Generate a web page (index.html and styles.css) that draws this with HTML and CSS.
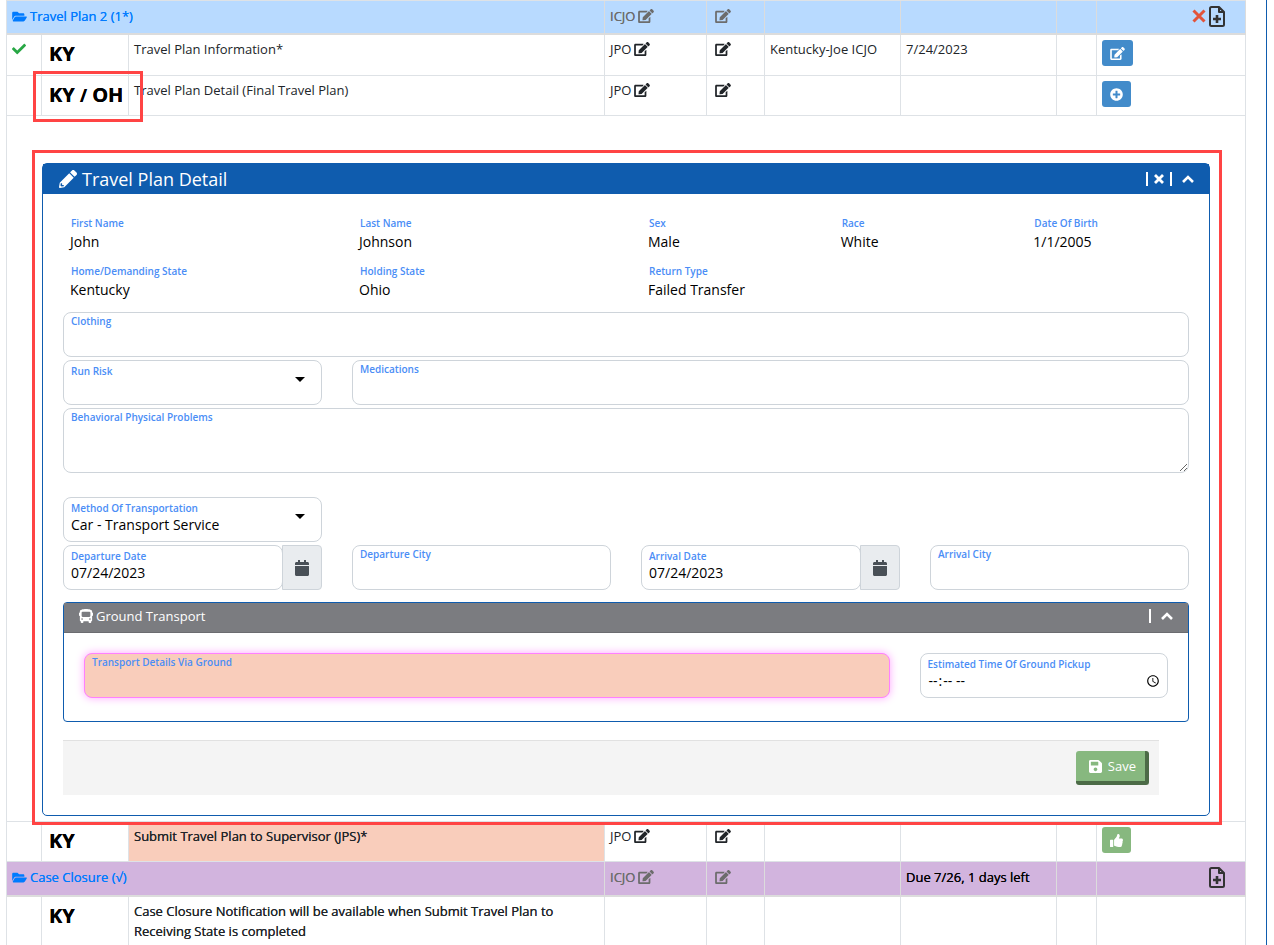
FILE: index.html
```html
<!DOCTYPE html>
<html lang="en">
<head>
<meta charset="utf-8">
<title>Travel Plan Detail</title>
<link rel="stylesheet" href="styles.css">
</head>
<body>
<svg class="sprite" aria-hidden="true">
  <symbol id="i-edit" viewBox="0 0 576 512"><path d="M402.6 83.2l90.2 90.2c3.8 3.8 3.8 10 0 13.8L274.4 405.6l-92.8 10.3c-12.4 1.4-22.9-9.1-21.5-21.5l10.3-92.8L388.8 83.2c3.8-3.8 10-3.8 13.8 0zm162-22.9l-48.8-48.8c-15.2-15.2-39.9-15.2-55.2 0l-35.4 35.4c-3.8 3.8-3.8 10 0 13.8l90.2 90.2c3.8 3.8 10 3.8 13.8 0l35.4-35.4c15.2-15.3 15.2-40 0-55.2zM384 346.2V448H64V128h229.8c3.2 0 6.2-1.3 8.5-3.5l40-40c7.6-7.6 2.2-20.5-8.5-20.5H48C21.5 64 0 85.5 0 112v352c0 26.5 21.5 48 48 48h352c26.5 0 48-21.5 48-48V306.2c0-10.7-12.9-16-20.5-8.5l-40 40c-2.2 2.3-3.5 5.3-3.5 8.5z"/></symbol>
  <symbol id="i-folder" viewBox="0 0 576 512"><path d="M572.694 292.093L500.27 416.248A63.997 63.997 0 0 1 444.989 448H45.025c-18.523 0-30.064-20.093-20.731-36.093l72.424-124.155A64 64 0 0 1 152 256h399.964c18.523 0 30.064 20.093 20.73 36.093zM152 224h328v-48c0-26.51-21.49-48-48-48H272l-64-64H48C21.49 64 0 85.49 0 112v278.046l69.077-118.418C86.214 242.25 117.989 224 152 224z"/></symbol>
  <symbol id="i-check" viewBox="0 0 512 512"><path d="M173.898 439.404l-166.4-166.4c-9.997-9.997-9.997-26.206 0-36.204l36.203-36.204c9.997-9.998 26.207-9.998 36.204 0L192 312.69 432.095 72.596c9.997-9.997 26.207-9.997 36.204 0l36.203 36.204c9.997 9.997 9.997 26.206 0 36.204l-294.4 294.401c-9.998 9.997-26.207 9.997-36.204-.001z"/></symbol>
  <symbol id="i-pencil" viewBox="0 0 512 512"><path d="M497.900 142.100l-46.100 46.100c-4.700 4.700-12.300 4.700-17 0l-111-111c-4.700-4.700-4.700-12.300 0-17l46.100-46.100c18.700-18.700 49.100-18.700 67.900 0l60.100 60.100c18.800 18.700 18.800 49.100 0 67.900zM284.200 99.800L21.600 362.400.4 483.900c-2.900 16.400 11.400 30.600 27.800 27.800l121.500-21.300 262.600-262.600c4.700-4.700 4.700-12.300 0-17l-111-111c-4.800-4.700-12.400-4.700-17.100 0zM88 424h48v36.300l-64.500 11.300-31.100-31.100L51.700 376H88v48z"/></symbol>
  <symbol id="i-plus" viewBox="0 0 512 512"><path d="M256 8C119 8 8 119 8 256s111 248 248 248 248-111 248-248S393 8 256 8zm144 276c0 6.6-5.4 12-12 12h-92v92c0 6.6-5.4 12-12 12h-56c-6.6 0-12-5.4-12-12v-92h-92c-6.6 0-12-5.4-12-12v-56c0-6.6 5.4-12 12-12h92v-92c0-6.6 5.4-12 12-12h56c6.6 0 12 5.4 12 12v92h92c6.6 0 12 5.4 12 12v56z"/></symbol>
  <symbol id="i-save" viewBox="0 0 448 512"><path d="M433.941 129.941l-83.882-83.882A48 48 0 0 0 316.118 32H48C21.49 32 0 53.49 0 80v352c0 26.51 21.49 48 48 48h352c26.51 0 48-21.49 48-48V163.882a48 48 0 0 0-14.059-33.941zM224 416c-35.346 0-64-28.654-64-64 0-35.346 28.654-64 64-64s64 28.654 64 64c0 35.346-28.654 64-64 64zm96-304.52V212c0 6.627-5.373 12-12 12H76c-6.627 0-12-5.373-12-12V108c0-6.627 5.373-12 12-12h228.52c3.183 0 6.235 1.264 8.485 3.515l3.48 3.48A11.996 11.996 0 0 1 320 111.48z"/></symbol>
  <symbol id="i-thumb" viewBox="0 0 512 512"><path d="M104 224H24c-13.255 0-24 10.745-24 24v240c0 13.255 10.745 24 24 24h80c13.255 0 24-10.745 24-24V248c0-13.255-10.745-24-24-24zM384 81.452c0 42.416-25.97 66.208-33.277 94.548h101.723c33.397 0 59.397 27.746 59.553 58.098.084 17.938-7.546 37.249-19.439 49.197l-.11.11c9.836 23.337 8.237 56.037-9.308 79.469 8.681 25.895-.069 57.704-16.382 74.757 4.298 17.598 2.244 32.575-6.148 44.632C440.202 511.587 389.616 512 346.839 512l-2.845-.001c-48.287-.017-87.806-17.598-119.56-31.725-15.957-7.099-36.821-15.887-52.651-16.178-6.54-.12-11.783-5.457-11.783-11.998v-213.77c0-3.2 1.282-6.271 3.558-8.521 39.614-39.144 56.648-80.587 89.117-113.111 14.804-14.832 20.188-37.236 25.393-58.902C282.515 39.293 291.817 0 312 0c24 0 72 8 72 81.452z"/></symbol>
  <symbol id="i-calendar" viewBox="0 0 448 512"><path d="M12 192h424c6.600 0 12 5.400 12 12v260c0 26.500-21.500 48-48 48H48c-26.500 0-48-21.500-48-48V204c0-6.600 5.400-12 12-12zm436-44v-36c0-26.500-21.500-48-48-48h-48V12c0-6.600-5.400-12-12-12h-40c-6.600 0-12 5.400-12 12v52H160V12c0-6.600-5.400-12-12-12h-40c-6.600 0-12 5.400-12 12v52H48C21.500 64 0 85.500 0 112v36c0 6.600 5.400 12 12 12h424c6.600 0 12-5.400 12-12z"/></symbol>
  <symbol id="i-bus" viewBox="0 0 512 512"><path d="M488 128h-8V80c0-44.800-99.200-80-224-80S32 35.200 32 80v48h-8c-13.250 0-24 10.740-24 24v80c0 13.250 10.750 24 24 24h8v160c0 17.670 14.330 32 32 32v32c0 17.670 14.330 32 32 32h32c17.670 0 32-14.330 32-32v-32h192v32c0 17.670 14.330 32 32 32h32c17.670 0 32-14.330 32-32v-32h6.400c16 0 25.600-12.800 25.600-25.600V256h8c13.250 0 24-10.750 24-24v-80c0-13.260-10.750-24-24-24zM112 400c-17.670 0-32-14.330-32-32s14.330-32 32-32 32 14.330 32 32-14.330 32-32 32zm16-112c-17.670 0-32-14.330-32-32V128c0-17.670 14.330-32 32-32h256c17.670 0 32 14.330 32 32v128c0 17.670-14.330 32-32 32H128zm272 112c-17.670 0-32-14.330-32-32s14.330-32 32-32 32 14.330 32 32-14.330 32-32 32z"/></symbol>
  <symbol id="i-file" viewBox="0 0 16 21"><path fill="none" stroke="currentColor" stroke-width="2" stroke-linejoin="round" d="M3 1h7l5 5v12.500a1.500 1.500 0 0 1-1.500 1.500h-11A1.500 1.500 0 0 1 1 18.500v-16A1.500 1.500 0 0 1 2.500 1zM10 1v5h5"/><path fill="none" stroke="currentColor" stroke-width="2.600" d="M8 9v8M4 13h8"/></symbol>
  <symbol id="i-x" viewBox="0 0 14 14"><path fill="none" stroke="currentColor" stroke-width="3" d="M1.500 1.500l11 11M12.500 1.500l-11 11"/></symbol>
  <symbol id="i-close" viewBox="0 0 10 10"><path fill="none" stroke="currentColor" stroke-width="2.800" d="M1 1l8 8M9 1L1 9"/></symbol>
  <symbol id="i-up" viewBox="0 0 12 8"><path fill="none" stroke="currentColor" stroke-width="2.600" d="M1 7l5-5 5 5"/></symbol>
</svg>

<main class="page">
<table class="tasks">
  <colgroup>
    <col class="c-status"><col class="c-state"><col class="c-title"><col class="c-role"><col class="c-edit"><col class="c-user"><col class="c-date"><col class="c-gap"><col class="c-act">
  </colgroup>
  <tbody>
  <tr class="group group-blue">
    <td colspan="3"><a href="#plan"><svg class="ic folder"><use href="#i-folder"/></svg>Travel Plan 2 (1*)</a></td>
    <td><button class="role" type="button">ICJO<svg class="ic edit"><use href="#i-edit"/></svg></button></td>
    <td class="center"><button class="role" type="button" aria-label="Edit"><svg class="ic edit"><use href="#i-edit"/></svg></button></td>
    <td></td><td></td><td></td>
    <td><div class="tools"><button class="tool del" type="button" aria-label="Delete"><svg class="ic x"><use href="#i-x"/></svg></button><button class="tool" type="button" aria-label="Add document"><svg class="ic file"><use href="#i-file"/></svg></button></div></td>
  </tr>
  <tr class="item first">
    <td><svg class="ic check"><use href="#i-check"/></svg></td>
    <td class="state">KY</td>
    <td>Travel Plan Information*</td>
    <td><button class="role" type="button">JPO<svg class="ic edit"><use href="#i-edit"/></svg></button></td>
    <td class="center"><button class="role" type="button" aria-label="Edit"><svg class="ic edit"><use href="#i-edit"/></svg></button></td>
    <td>Kentucky-Joe ICJO</td><td>7/24/2023</td><td></td>
    <td><button class="act" type="button" aria-label="Open"><svg class="ic edit small"><use href="#i-edit"/></svg></button></td>
  </tr>
  <tr class="item">
    <td></td>
    <td class="state">KY <small>/</small> OH<span class="mark mark-state"></span></td>
    <td>Travel Plan Detail (Final Travel Plan)</td>
    <td><button class="role" type="button">JPO<svg class="ic edit"><use href="#i-edit"/></svg></button></td>
    <td class="center"><button class="role" type="button" aria-label="Edit"><svg class="ic edit"><use href="#i-edit"/></svg></button></td>
    <td></td><td></td><td></td>
    <td><button class="act" type="button" aria-label="Add"><svg class="ic sq"><use href="#i-plus"/></svg></button></td>
  </tr>
  <tr class="detail">
    <td colspan="9">
      <section class="panel" id="plan">
        <span class="mark mark-panel"></span>
        <header class="panel-head">
          <h2><svg class="ic pencil"><use href="#i-pencil"/></svg>Travel Plan Detail</h2>
          <div class="panel-tools"><i class="bar"></i><button type="button" aria-label="Close"><svg class="ic close"><use href="#i-close"/></svg></button><i class="bar"></i><button class="fold" type="button" aria-label="Collapse"><svg class="ic up"><use href="#i-up"/></svg></button></div>
        </header>
        <form class="panel-body">
          <dl class="row info">
            <div class="s3"><dt>First Name</dt><dd>John</dd></div>
            <div class="s3"><dt>Last Name</dt><dd>Johnson</dd></div>
            <div class="s2"><dt>Sex</dt><dd>Male</dd></div>
            <div class="s2"><dt>Race</dt><dd>White</dd></div>
            <div class="s2"><dt>Date Of Birth</dt><dd>1/1/2005</dd></div>
            <div class="s3"><dt>Home/Demanding State</dt><dd>Kentucky</dd></div>
            <div class="s3"><dt>Holding State</dt><dd>Ohio</dd></div>
            <div class="s3"><dt>Return Type</dt><dd>Failed Transfer</dd></div>
          </dl>
          <div class="row">
            <div class="field s12"><label for="clothing">Clothing</label><input id="clothing" type="text"></div>
          </div>
          <div class="row">
            <div class="field low s3"><label for="risk">Run Risk</label><select id="risk"><option></option></select></div>
            <div class="field s9"><label for="meds">Medications</label><input id="meds" type="text"></div>
          </div>
          <div class="row">
            <div class="field area s12"><label for="problems">Behavioral Physical Problems</label><textarea id="problems"></textarea></div>
          </div>
          <div class="row apart">
            <div class="field low s3"><label for="method">Method Of Transportation</label><select id="method"><option>Car - Transport Service</option></select></div>
          </div>
          <div class="row">
            <div class="group-field s3">
              <div class="field low"><label for="dep">Departure Date</label><input id="dep" type="text" value="07/24/2023"></div>
              <button class="addon" type="button" aria-label="Choose departure date"><svg class="ic cal"><use href="#i-calendar"/></svg></button>
            </div>
            <div class="field s3"><label for="depcity">Departure City</label><input id="depcity" type="text"></div>
            <div class="group-field s3">
              <div class="field low"><label for="arr">Arrival Date</label><input id="arr" type="text" value="07/24/2023"></div>
              <button class="addon" type="button" aria-label="Choose arrival date"><svg class="ic cal"><use href="#i-calendar"/></svg></button>
            </div>
            <div class="field s3"><label for="arrcity">Arrival City</label><input id="arrcity" type="text"></div>
          </div>
          <section class="subpanel">
            <header class="sub-head">
              <h3><svg class="ic bus"><use href="#i-bus"/></svg>Ground Transport</h3>
              <div class="panel-tools"><i class="bar"></i><button class="fold" type="button" aria-label="Collapse"><svg class="ic up"><use href="#i-up"/></svg></button></div>
            </header>
            <div class="row sub-body">
              <div class="field required s9"><label for="ground">Transport Details Via Ground</label><input id="ground" type="text"></div>
              <div class="field low time s3"><label for="pickup">Estimated Time Of Ground Pickup</label><input id="pickup" type="time"></div>
            </div>
          </section>
          <footer class="actions"><button class="save" type="button"><svg class="ic disk"><use href="#i-save"/></svg>Save</button></footer>
        </form>
      </section>
    </td>
  </tr>
  <tr class="item">
    <td></td>
    <td class="state">KY</td>
    <td class="due">Submit Travel Plan to Supervisor (JPS)*</td>
    <td><button class="role" type="button">JPO<svg class="ic edit"><use href="#i-edit"/></svg></button></td>
    <td class="center"><button class="role" type="button" aria-label="Edit"><svg class="ic edit"><use href="#i-edit"/></svg></button></td>
    <td></td><td></td><td></td>
    <td><button class="act green" type="button" aria-label="Approve"><svg class="ic sq"><use href="#i-thumb"/></svg></button></td>
  </tr>
  <tr class="group group-purple">
    <td colspan="3"><a href="#closure"><svg class="ic folder"><use href="#i-folder"/></svg>Case Closure (√)</a></td>
    <td><button class="role" type="button">ICJO<svg class="ic edit"><use href="#i-edit"/></svg></button></td>
    <td class="center"><button class="role" type="button" aria-label="Edit"><svg class="ic edit"><use href="#i-edit"/></svg></button></td>
    <td></td><td>Due 7/26, 1 days left</td><td></td>
    <td><div class="tools"><button class="tool" type="button" aria-label="Add document"><svg class="ic file"><use href="#i-file"/></svg></button></div></td>
  </tr>
  <tr class="item last" id="closure">
    <td></td>
    <td class="state">KY</td>
    <td class="strong">Case Closure Notification will be available when Submit Travel Plan to Receiving State is completed</td>
    <td></td><td></td><td></td><td></td><td></td><td></td>
  </tr>
  </tbody>
</table>
</main>
</body>
</html>
```
FILE: styles.css
```css
* { box-sizing: border-box; }

body {
  margin: 0;
  background: #fff;
  color: #212529;
  font: 13px/20px "Open Sans", "Noto Sans", sans-serif;
}

button, input, select, textarea {
  margin: 0;
  padding: 0;
  border: 0;
  background: none;
  color: inherit;
  font: inherit;
}

.sprite { display: none; }
.ic { display: inline-block; fill: currentColor; vertical-align: -2px; }
.edit { width: 16px; height: 14px; }
.edit.small { width: 15px; height: 13px; }
.sq { width: 13px; height: 13px; }
.folder { width: 15px; height: 13px; margin-right: 3px; }
.check { width: 14px; height: 14px; color: #28a745; }
.x { width: 14px; height: 14px; }
.file { width: 16px; height: 21px; }
.pencil { width: 18px; height: 18px; }
.close { width: 10px; height: 10px; }
.up { width: 12px; height: 8px; }
.cal { width: 14px; height: 16px; }
.bus { width: 14px; height: 14px; }
.disk { width: 13px; height: 15px; }

.page {
  min-height: 100vh;
  margin-right: 7px;
  padding: 0 20px 0 6px;
  border-right: 1px solid #0f5cae;
}

/* Task table */
.tasks {
  width: 100%;
  table-layout: fixed;
  border-collapse: separate;
  border-spacing: 0;
  border: solid #dee2e6;
  border-width: 1px 0 0 1px;
}
.c-status { width: 35px; }
.c-state { width: 87px; }
.c-role { width: 102px; }
.c-edit { width: 58px; }
.c-user { width: 136px; }
.c-date { width: 156px; }
.c-gap { width: 40px; }
.c-act { width: 149px; }

.tasks td {
  padding: 4px 5px;
  border: solid #dee2e6;
  border-width: 0 1px 1px 0;
  vertical-align: top;
}
.tasks .center { padding-left: 8px; }
.item { height: 40px; }
.item.first { height: 41px; }
.group { height: 34px; color: #000; }
.group, .due, .strong, .state { text-shadow: 0 0 0 currentColor; }
.tasks .group td { border-bottom-width: 2px; padding-top: 5px; border-color: #dcdcdc; }
.group a { color: #007bff; text-decoration: none; text-shadow: 0 0 0 currentColor; }
.group-blue td { background: #b8daff; }
.group-purple { height: 35px; }
.group-purple td { background: #d2b4de; }
.role { display: flex; align-items: center; gap: 3px; height: 20px; }
.group .role { color: #6c6c6c; text-shadow: 0 0 0 currentColor; }
.tasks .state {
  position: relative;
  padding: 5px 0 4px 7px;
  color: #000;
  font-size: 20px;
  line-height: 28px;
  font-weight: 700;
  white-space: nowrap;
}
.state small { font-size: 17px; }
.tasks .due { background: #f9cdbb; }
.last { height: 48px; }
.tasks .last td { border-bottom: 0; }
.tools { display: flex; justify-content: flex-end; align-items: center; gap: 3px; height: 20px; padding-right: 15px; }
.tool { display: flex; color: #333; }
.del { color: #e2533a; }
.act {
  display: flex;
  align-items: center;
  height: 26px;
  margin-top: 1px;
  padding: 0 8px;
  border-radius: 3px;
  background: #428bca;
  color: #fff;
}
.green { background: #87b87f; }

/* Callout outlines */
.mark { position: absolute; z-index: 2; border: 3px solid #ff4444; pointer-events: none; }
.mark-state { inset: -5px -15px -7px -9px; }
.mark-panel { inset: -14px -13px -10px -11px; }

/* Detail panel */
.tasks .detail > td { padding: 47px 35px 5px; }
.panel { position: relative; border: 1px solid #0f5cae; border-radius: 5px; }
.panel-head {
  display: flex;
  justify-content: space-between;
  align-items: center;
  height: 30px;
  padding: 0 15px 0 16px;
  background: #0f5cae;
  color: #fff;
}
h2, h3 { display: flex; align-items: center; margin: 0; font-weight: 400; }
h2 { gap: 5px; font-size: 18px; }
h3 { gap: 3px; font-size: 13px; }
.panel-tools { display: flex; align-items: center; gap: 6px; }
.panel-tools button { display: flex; }
.panel-tools .fold { margin-left: 4px; }
.bar { width: 2px; height: 14px; background: #fff; }
.panel-body { padding: 20px; }
.row { display: grid; grid-template-columns: repeat(12, minmax(0, 1fr)); column-gap: 30px; margin-bottom: 3px; }
.s2 { grid-column: span 2; }
.s3 { grid-column: span 3; }
.s9 { grid-column: span 9; }
.s12 { grid-column: span 12; }

.info { margin: 0 0 12px; row-gap: 10px; padding-left: 7px; margin-right: -7px; }
dt, label { color: #4a8df6; font-size: 10px; line-height: 14px; font-weight: 600; }
dt { padding-left: 1px; line-height: 18px; }
dd { margin: 0; color: #000; font-size: 14px; line-height: 20px; }

.field {
  display: flex;
  flex-direction: column;
  min-height: 45px;
  padding: 1px 7px 0;
  border: 1px solid #ced4da;
  border-radius: 8px;
  background: #fff;
}
.field.low { padding-top: 3px; }
.field input, .field select, .field textarea {
  width: 100%;
  height: 20px;
  color: #000;
  font-size: 14px;
  outline: 0;
}
.field.time { padding-right: 3px; }
.field select { appearance: none; }
.field:has(select) { position: relative; }
.field:has(select)::after {
  content: "";
  position: absolute;
  top: 16px;
  right: 16px;
  border: 5px solid transparent;
  border-top-color: #000;
  border-bottom: 0;
}
.field.area { min-height: 65px; padding-right: 0; }
.field.area textarea { height: 48px; resize: vertical; }
.apart { margin-top: 24px; }
.group-field { display: flex; }
.group-field .field { flex: 1; min-width: 0; }
.addon {
  display: flex;
  align-items: center;
  justify-content: center;
  width: 40px;
  margin-left: -1px;
  border: 1px solid #ced4da;
  border-radius: 0 4px 4px 0;
  background: #e9ecef;
  color: #495057;
}
.field.required { background: #f9cdbb; border-color: #ff80ff; box-shadow: 0 0 8px #ffa6ff; }

.subpanel { margin-top: 12px; border: 1px solid #0f5cae; border-radius: 4px; }
.sub-head {
  display: flex;
  justify-content: space-between;
  align-items: center;
  height: 30px;
  padding: 0 15px 3px;
  border-bottom: 1px solid #6b6c70;
  background: #7b7c80;
  color: #fff;
}
.sub-body { margin: 0; padding: 20px 20px 23px; }
.actions {
  display: flex;
  justify-content: flex-end;
  margin: 18px 30px 0 0;
  padding: 10px;
  border-top: 1px solid #e1e1e1;
  background: #f4f4f4;
}
.save {
  display: flex;
  align-items: center;
  gap: 6px;
  height: 34px;
  padding: 0 9px 0 13px;
  border: solid #4c6b47;
  border-width: 0 4px 4px 0;
  border-radius: 3px;
  background: #87b87f;
  color: #fff;
}
```
